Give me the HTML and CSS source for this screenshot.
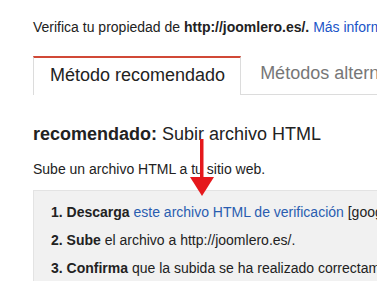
FILE: index.html
```html
<!DOCTYPE html>
<html lang="es">
<head>
    <meta charset="UTF-8">
    <meta name="viewport" content="width=device-width, initial-scale=1.0">
    <title>Verificar propiedad</title>

    <link rel="stylesheet" href="styles.css">
</head>
<body>
    <div class="pagina">
        <p class="intro">Verifica tu propiedad de <b>http://joomlero.es/.</b> <a href="#">Más información</a></p>

        <!-- Pestañas -->
        <div class="pestanas">
            <div class="pestana activa">Método recomendado</div>
            <div class="pestana">Métodos alternativos</div>
        </div>

        <h2 class="titulo"><b>recomendado:</b> Subir archivo HTML</h2>
        <p class="descripcion">Sube un archivo HTML a tu sitio web.</p>

        <div class="pasos">
            <p><b>1. Descarga</b> <a href="#">este archivo HTML de verificación</a> [google1234567890abcdef.html].</p>
            <p><b>2. Sube</b> el archivo a http://joomlero.es/.</p>
            <p><b>3. Confirma</b> que la subida se ha realizado correctamente.</p>
        </div>

        <svg class="flecha" width="26" height="58" viewBox="0 0 26 58">
            <rect x="11" y="0" width="3.5" height="40" fill="#e5181c"/>
            <polygon points="1,38 25,38 13,57" fill="#e5181c"/>
        </svg>
    </div>
</body>
</html>
```

FILE: styles.css
```css
body {
    font-family: Arial, "Liberation Sans", sans-serif;
    background-color: #fff;
    color: #222;
    margin: 0;
    overflow: hidden;
}
.pagina {
    position: relative;
    padding: 18px 0 0 33px;
    white-space: nowrap;
}
a {
    color: #1a55c8;
    text-decoration: none;
}

.intro {
    font-size: 14px;
    margin: 0;
    line-height: 18px;
}

.pestanas {
    display: flex;
    margin-top: 20px;
    border-bottom: 1px solid #dcdcdc;
}
.pestana {
    font-size: 18px;
    color: #777;
    padding: 0 19px;
    height: 37px;
    line-height: 35px;
}
.pestana.activa {
    color: #222;
    border-top: 2px solid #d14836;
    border-left: 1px solid #dcdcdc;
    border-right: 1px solid #dcdcdc;
    padding: 0 15px 0 16px;
    margin-bottom: -1px;
    background: #fff;
}

.titulo {
    font-size: 18px;
    font-weight: normal;
    margin: 28px 0 0;
    line-height: 22px;
}

.descripcion {
    font-size: 14px;
    margin: 15px 0 0;
    line-height: 18px;
}

.pasos {
    margin-top: 12px;
    background-color: #f1f1f1;
    border: 1px solid #e3e3e3;
    border-right: none;
    padding: 12px 0 0 17px;
    height: 100px;
}
.pasos p {
    font-size: 14px;
    margin: 0 0 10px;
    line-height: 18px;
}
.pasos a {
    color: #2a5db0;
}

.flecha {
    position: absolute;
    left: 189px;
    top: 139px;
}
```
